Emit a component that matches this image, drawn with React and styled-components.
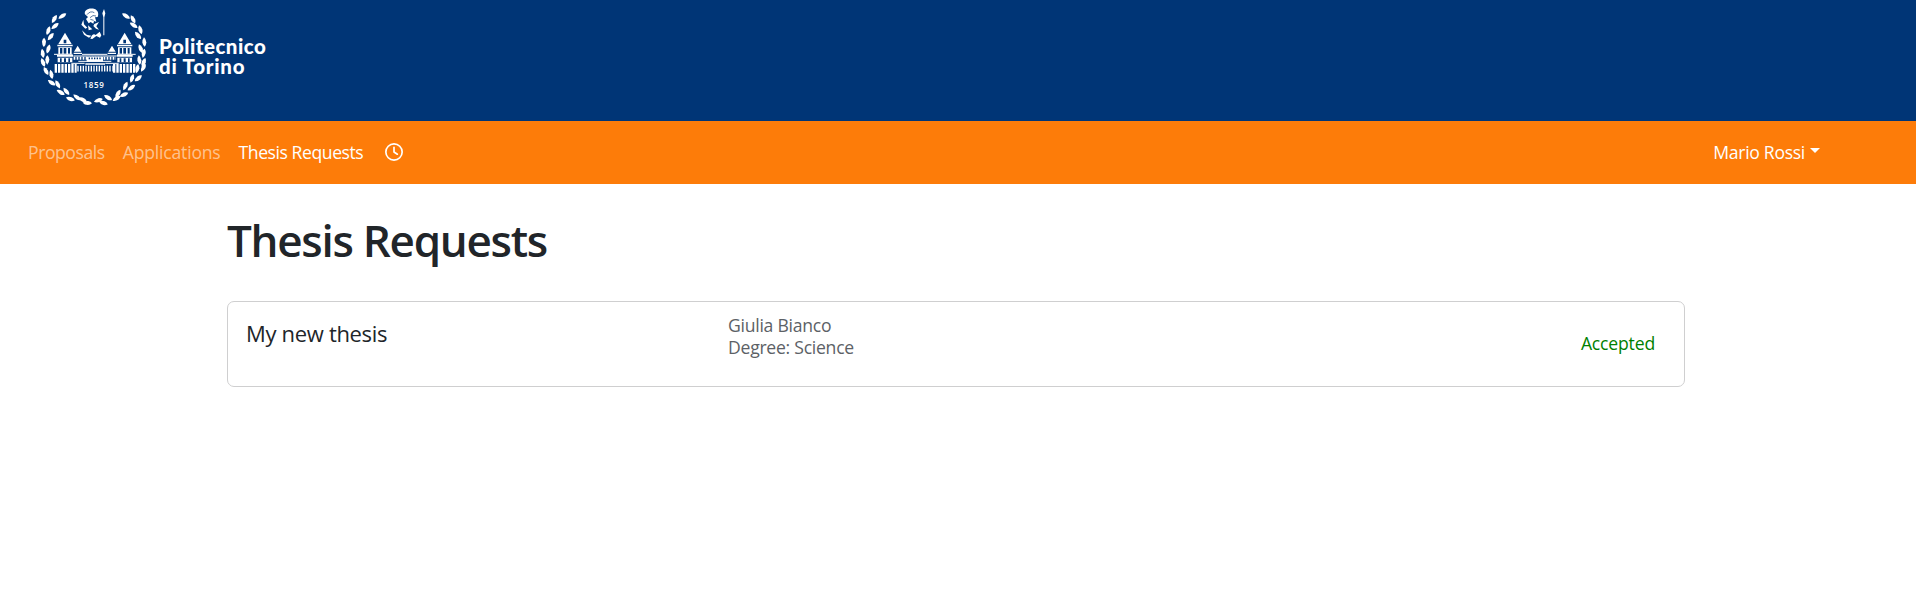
import React from 'react';
import styled, { createGlobalStyle } from 'styled-components';
import { FaRegClock } from 'react-icons/fa6';

const GlobalStyle = createGlobalStyle`
  *, *::before, *::after { box-sizing: border-box; }
  body {
    margin: 0;
    background: #fff;
    color: #212529;
    font-family: "Segoe UI", "Open Sans", "Noto Sans", sans-serif;
    font-size: 17.6px;
    line-height: 1.5;
  }
`;

const Page = styled.div`
  width: 1916px;
`;

const Banner = styled.header`
  display: flex;
  height: 121px;
  padding-left: 30px;
  background: #003576;
`;

const Crest = styled.svg`
  width: 120px;
  height: 121px;
  flex: none;
`;

const Wordmark = styled.div`
  display: flex;
  flex-direction: column;
  margin: 36px 0 0 9px;
  color: #fff;
  font: 900 20.5px/20px Lato, sans-serif;
  letter-spacing: 0.5px;
  white-space: nowrap;
`;

const WordmarkLine = styled.span`
  letter-spacing: ${(p) => p.$spacing};
`;

const Navbar = styled.nav`
  display: flex;
  align-items: center;
  height: 63px;
  padding: 0 96px 0 28px;
  background: #fd7c09;
`;

const NavLink = styled.a`
  margin-right: 18px;
  color: ${(p) => (p.$active ? '#fff' : 'rgba(255, 255, 255, 0.55)')};
  letter-spacing: ${(p) => p.$spacing || '-0.44px'};
  white-space: nowrap;
`;

const ClockIcon = styled(FaRegClock)`
  width: 18px;
  height: 18px;
  margin: -2px 0 0 4px;
  color: #fff;
`;

const UserMenu = styled.a`
  display: flex;
  align-items: center;
  margin-left: auto;
  color: #fff;
  letter-spacing: -0.3px;

  &::after {
    content: '';
    margin-left: 5px;
    margin-top: -3px;
    border: 5px solid transparent;
    border-top-color: #fff;
    border-bottom: 0;
  }
`;

const Main = styled.main`
  padding: 28px 231px 0 227px;
`;

const Title = styled.h1`
  margin: 0 0 32px;
  font-size: 44px;
  font-weight: 600;
  line-height: 57px;
  letter-spacing: -1.28px;
`;

const Card = styled.article`
  display: grid;
  grid-template-columns: 482px 1fr auto;
  height: 86px;
  padding: 0 29px 0 18px;
  border: 1px solid #cfcfd0;
  border-radius: 7px;
`;

const CardTitle = styled.div`
  padding-top: 15px;
  font-size: 22px;
  line-height: 32px;
  letter-spacing: -0.32px;
`;

const Details = styled.div`
  padding-top: 12px;
  color: #5c6166;
  line-height: 22px;
  letter-spacing: -0.26px;
`;

const Status = styled.div`
  align-self: center;
  margin-top: -2px;
  color: #008000;
  letter-spacing: -0.18px;
`;

/* [cx, cy, rotation] of every laurel leaf */
const LEAVES = [
  [97, 48, -32], [73, 57, -58], [75, 78, -38], [55, 92, -72], [62, 110, -50],
  [42, 127, -88], [55, 147, -72], [38, 160, 82], [52, 180, -88], [39, 187, 70],
  [64, 223, 78], [48, 213, 62], [65, 248, 35], [83, 253, 62], [92, 277, 30],
  [109, 274, 52], [121, 297, 18], [141, 292, 38], [172, 309, 4], [158, 299, 25],
  [288, 48, 32], [309, 58, 62], [311, 76, 34], [331, 89, 74], [324, 106, 50],
  [343, 126, 86], [332, 146, 68], [341, 160, -78], [328, 180, 84], [341, 187, -68],
  [322, 206, -80], [340, 203, -62], [306, 235, -72], [325, 235, -40],
  [286, 258, -64], [304, 263, -35], [264, 281, -58], [282, 284, -24],
  [234, 293, 30], [260, 295, -30], [205, 301, -18], [220, 309, 18],
];

const WINGS = [105, 284];

const PolitoCrest = () => (
  <Crest viewBox="0 0 360 363" fill="#fff">
    {LEAVES.map(([x, y, r]) => (
      <path key={`${x}-${y}`} transform={`translate(${x} ${y}) rotate(${r})`} d="M-14 0Q-8-6 2-6Q10-5 14 0Q9 5 2 6Q-8 6-14 0Z" />
    ))}
    <path d="M165 43C161 31 176 22 194 27C204 31 207 42 203 51L195 52L199 65L192 63L190 71L182 66L176 70L168 57L174 51Z" />
    <path d="M160 59L154 74L166 86L172 83L162 73ZM174 76L187 88L176 91ZM193 72L207 66L199 79L207 89L198 86L190 78ZM156 91L170 104L184 107L177 113L162 104ZM181 116Q188 98 197 105L209 95L214 106L210 113L199 108L187 117Z" />
    <path d="M222 27L226 40L223 52V106H220V52L217 40Z" />
    <g fill="none" stroke="#003576" strokeWidth="2">
      <path d="M171 44Q181 31 193 38M180 53Q189 43 198 48M181 58L191 61" />
    </g>
    {WINGS.map((x) => (
      <g key={x} transform={`translate(${x} 0)`}>
        <path d="M0 98L20 132H-20ZM-23 134H23V139H-23ZM-20 142H20V162H-20ZM-24 165H24V170H-24ZM-22 173H22V187H-22Z" />
        <path fill="#003576" d="M-4 119H4V130H-4ZM-15 144H-8V161H-15ZM-4 144H4V161H-4ZM9 144H15V161H9ZM-15 175H-10V187H-15ZM-3 175H3V187H-3ZM10 175H15V187H10Z" />
      </g>
    ))}
    <path d="M143 137L154 155H132ZM246 137L257 155H235ZM131 158H156V162H131ZM233 158H258V162H233Z" />
    <path d="M72 163H128M262 163H317M130 168H259M145 184H244M156 163H232" stroke="#fff" strokeWidth="3" />
    <path d="M131 175H258" stroke="#fff" strokeWidth="9" strokeDasharray="5 4" />
    <path d="M170 171H219V185H170ZM166 190H225V194H166Z" />
    <path d="M176 175H213" stroke="#003576" strokeWidth="5" strokeDasharray="4 4" />
    <path d="M74 205H140M249 205H318" stroke="#fff" strokeWidth="26" strokeDasharray="7 3" />
    <path d="M142 206H248" stroke="#fff" strokeWidth="17" strokeDasharray="4 4" />
    <path d="M124 190H164M226 190H266" stroke="#fff" strokeWidth="3" />
    <text x="192" y="263" textAnchor="middle" fontFamily="Open Sans, sans-serif" fontWeight="600" fontSize="24" letterSpacing="2">1859</text>
  </Crest>
);

export default function App() {
  return (
    <>
      <GlobalStyle />
      <Page>
        <Banner>
          <PolitoCrest />
          <Wordmark>
            <WordmarkLine $spacing="0.5px">Politecnico</WordmarkLine>
            <WordmarkLine $spacing="0.75px">di Torino</WordmarkLine>
          </Wordmark>
        </Banner>
        <Navbar>
          <NavLink>Proposals</NavLink>
          <NavLink $spacing="-0.2px">Applications</NavLink>
          <NavLink $active>Thesis Requests</NavLink>
          <ClockIcon />
          <UserMenu>Mario Rossi</UserMenu>
        </Navbar>
        <Main>
          <Title>Thesis Requests</Title>
          <Card>
            <CardTitle>My new thesis</CardTitle>
            <Details>Giulia Bianco<br />Degree: Science</Details>
            <Status>Accepted</Status>
          </Card>
        </Main>
      </Page>
    </>
  );
}
